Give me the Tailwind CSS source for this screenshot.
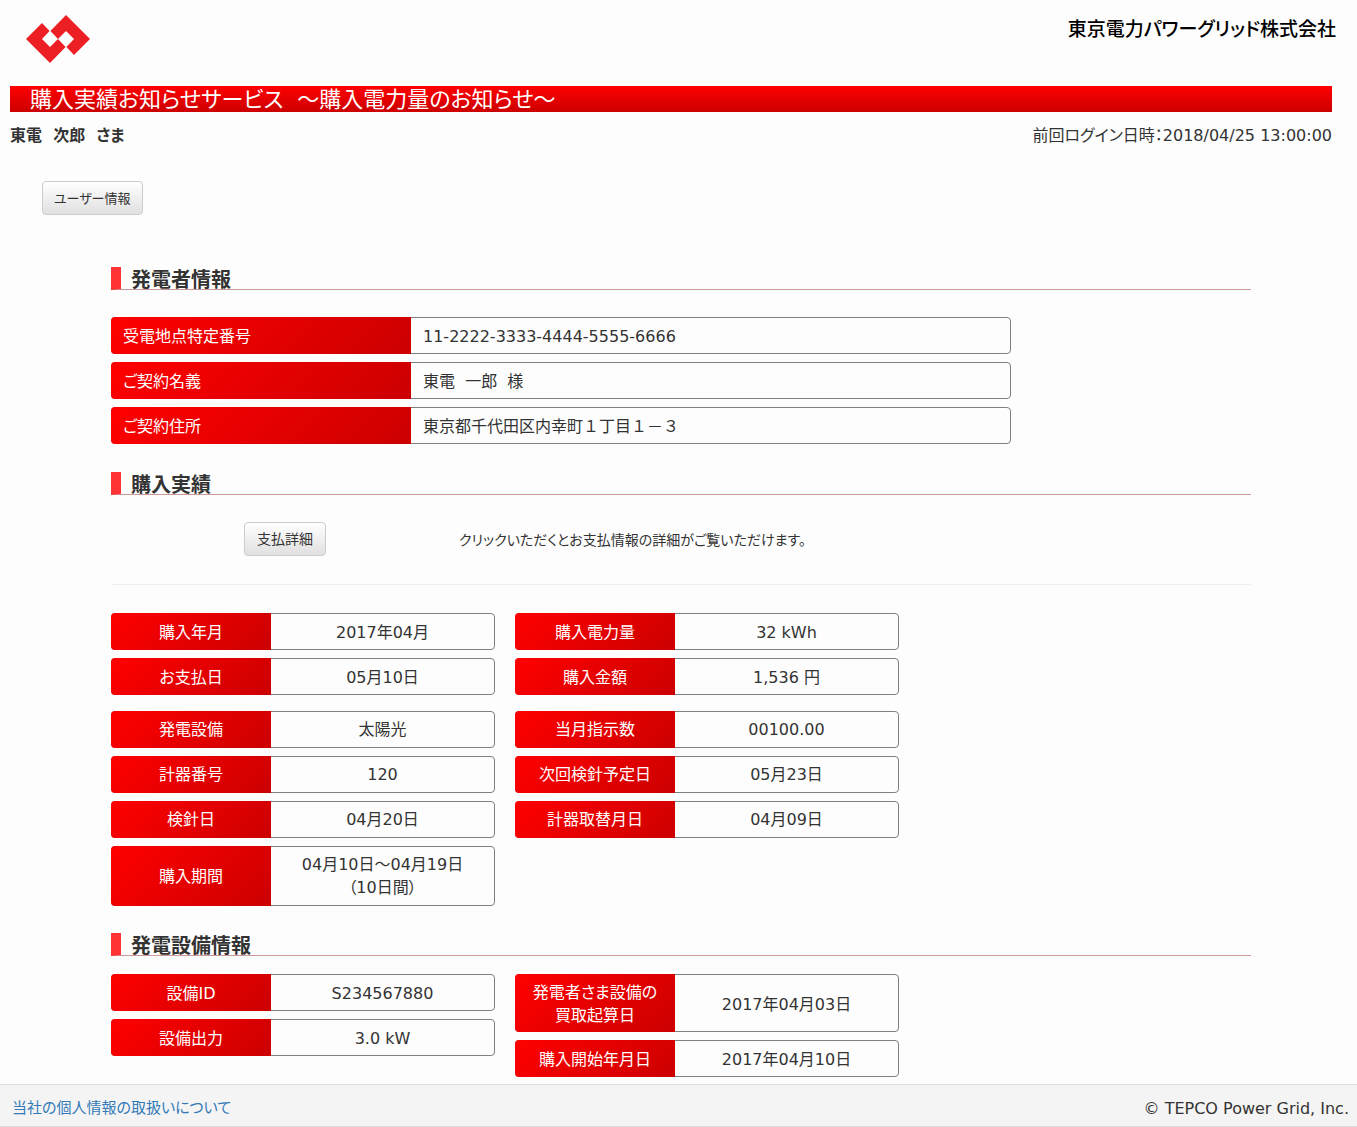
<!DOCTYPE html>
<html lang="ja">
<head>
<meta charset="utf-8">
<meta name="viewport" content="width=device-width, initial-scale=1">
<title>購入実績お知らせサービス</title>
<script src="https://cdn.jsdelivr.net/npm/@tailwindcss/browser@4"></script>
</head>
<body class="flex min-h-screen flex-col bg-[#fdfdfd] font-['DejaVu_Sans','Noto_Sans_CJK_JP',sans-serif] text-base leading-[23px] text-[#333] [font-feature-settings:'palt']">
<header class="pl-2.5 pr-[25px]">
  <div class="-mr-1 flex h-[86px] items-start justify-between">
    <svg class="mt-[14px] ml-4 h-[50px] w-[64px]" viewBox="26 14 64 50" role="img" aria-label="TEPCO">
      <path fill="#ec2024" d="M26 39 42 23 49.600 31 42 39 50 47 58 39 65.600 47 50 63ZM50.400 31 66 15 90 39 74 55 66.400 47 74 39 66 31 58 39Z"/>
    </svg>
    <p class="mt-[17px] text-[19px] leading-6 font-medium text-black">東京電力パワーグリッド株式会社</p>
  </div>
  <h1 class="h-[26px] bg-linear-to-b from-[#ff0000] to-[#cc0000] pl-5 text-[22px] leading-7 text-white">購入実績お知らせサービス&nbsp;&nbsp;～購入電力量のお知らせ～</h1>
  <div class="mt-3 flex justify-between">
    <p class="font-bold">東電&nbsp;&nbsp;次郎&nbsp;&nbsp;さま</p>
    <p>前回ログイン日時：2018/04/25 13:00:00</p>
  </div>
  <button type="button" class="mt-[34px] ml-8 block h-[34px] rounded border border-[#ccc] bg-linear-to-b from-white to-[#e0e0e0] px-[11px] text-[13px]">ユーザー情報</button>
</header>
<main class="pt-[52px] pr-[106px] pb-[7px] pl-[111px]">
  <section>
    <h2 class="h-[23px] border-b border-l-10 border-b-[#cc9999] border-l-[#ff3333] pt-0.5 pl-2.5 text-xl leading-[22px] font-bold">発電者情報</h2>
    <dl class="mt-[27px] flex max-w-[900px] flex-col gap-2">
      <div class="flex rounded border border-[#808080]">
        <dt class="-my-px -ml-px w-[300px] rounded-l bg-linear-[135deg] from-[#ff0000] to-[#cc0000] px-3 pt-2 pb-1.5 text-white">受電地点特定番号</dt><dd class="flex-1 px-3 pt-[7px] pb-[5px]">11-2222-3333-4444-5555-6666</dd>
      </div>
      <div class="flex rounded border border-[#808080]">
        <dt class="-my-px -ml-px w-[300px] rounded-l bg-linear-[135deg] from-[#ff0000] to-[#cc0000] px-3 pt-2 pb-1.5 text-white">ご契約名義</dt><dd class="flex-1 px-3 pt-[7px] pb-[5px]">東電&nbsp;&nbsp;一郎&nbsp;&nbsp;様</dd>
      </div>
      <div class="flex rounded border border-[#808080]">
        <dt class="-my-px -ml-px w-[300px] rounded-l bg-linear-[135deg] from-[#ff0000] to-[#cc0000] px-3 pt-2 pb-1.5 text-white">ご契約住所</dt><dd class="flex-1 px-3 pt-[7px] pb-[5px] [font-feature-settings:normal]">東京都千代田区内幸町１丁目１－３</dd>
      </div>
    </dl>
  </section>
  <section class="mt-7">
    <h2 class="h-[23px] border-b border-l-10 border-b-[#cc9999] border-l-[#ff3333] pt-0.5 pl-2.5 text-xl leading-[22px] font-bold">購入実績</h2>
    <div class="flex items-center border-b border-[#eee] pt-[27px] pb-7">
      <div class="flex w-[348px] justify-center"><button type="button" class="h-[34px] rounded border border-[#ccc] bg-linear-to-b from-white to-[#e0e0e0] px-3 text-sm">支払詳細</button></div>
      <p class="pt-0.5 text-sm">クリックいただくとお支払情報の詳細がご覧いただけます。</p>
    </div>
    <div class="mt-7 flex items-start gap-5 text-center">
      <dl class="flex w-96 flex-col gap-2">
        <div class="flex rounded border border-[#808080]"><dt class="-my-px -ml-px flex w-40 items-center justify-center rounded-l bg-linear-[135deg] from-[#ff0000] to-[#cc0000] pt-0.5 text-white">購入年月</dt><dd class="flex-1 pt-[7px] pb-[5px]">2017年04月</dd></div>
        <div class="flex rounded border border-[#808080]"><dt class="-my-px -ml-px flex w-40 items-center justify-center rounded-l bg-linear-[135deg] from-[#ff0000] to-[#cc0000] pt-0.5 text-white">お支払日</dt><dd class="flex-1 pt-[7px] pb-[5px]">05月10日</dd></div>
        <div class="mt-2 flex rounded border border-[#808080]"><dt class="-my-px -ml-px flex w-40 items-center justify-center rounded-l bg-linear-[135deg] from-[#ff0000] to-[#cc0000] text-white">発電設備</dt><dd class="flex-1 py-1.5">太陽光</dd></div>
        <div class="flex rounded border border-[#808080]"><dt class="-my-px -ml-px flex w-40 items-center justify-center rounded-l bg-linear-[135deg] from-[#ff0000] to-[#cc0000] text-white">計器番号</dt><dd class="flex-1 py-1.5">120</dd></div>
        <div class="flex rounded border border-[#808080]"><dt class="-my-px -ml-px flex w-40 items-center justify-center rounded-l bg-linear-[135deg] from-[#ff0000] to-[#cc0000] text-white">検針日</dt><dd class="flex-1 py-1.5">04月20日</dd></div>
        <div class="flex rounded border border-[#808080]"><dt class="-my-px -ml-px flex w-40 items-center justify-center rounded-l bg-linear-[135deg] from-[#ff0000] to-[#cc0000] text-white">購入期間</dt><dd class="flex-1 py-1.5">04月10日～04月19日<br>（10日間）</dd></div>
      </dl>
      <dl class="flex w-96 flex-col gap-2">
        <div class="flex rounded border border-[#808080]"><dt class="-my-px -ml-px flex w-40 items-center justify-center rounded-l bg-linear-[135deg] from-[#ff0000] to-[#cc0000] pt-0.5 text-white">購入電力量</dt><dd class="flex-1 pt-[7px] pb-[5px]">32 kWh</dd></div>
        <div class="flex rounded border border-[#808080]"><dt class="-my-px -ml-px flex w-40 items-center justify-center rounded-l bg-linear-[135deg] from-[#ff0000] to-[#cc0000] pt-0.5 text-white">購入金額</dt><dd class="flex-1 pt-[7px] pb-[5px]">1,536 円</dd></div>
        <div class="mt-2 flex rounded border border-[#808080]"><dt class="-my-px -ml-px flex w-40 items-center justify-center rounded-l bg-linear-[135deg] from-[#ff0000] to-[#cc0000] text-white">当月指示数</dt><dd class="flex-1 py-1.5">00100.00</dd></div>
        <div class="flex rounded border border-[#808080]"><dt class="-my-px -ml-px flex w-40 items-center justify-center rounded-l bg-linear-[135deg] from-[#ff0000] to-[#cc0000] text-white">次回検針予定日</dt><dd class="flex-1 py-1.5">05月23日</dd></div>
        <div class="flex rounded border border-[#808080]"><dt class="-my-px -ml-px flex w-40 items-center justify-center rounded-l bg-linear-[135deg] from-[#ff0000] to-[#cc0000] text-white">計器取替月日</dt><dd class="flex-1 py-1.5">04月09日</dd></div>
      </dl>
    </div>
  </section>
  <section class="mt-[27px]">
    <h2 class="h-[23px] border-b border-l-10 border-b-[#cc9999] border-l-[#ff3333] pt-0.5 pl-2.5 text-xl leading-[22px] font-bold">発電設備情報</h2>
    <div class="mt-[18px] flex items-start gap-5 text-center">
      <dl class="flex w-96 flex-col gap-2">
        <div class="flex rounded border border-[#808080]"><dt class="-my-px -ml-px flex w-40 items-center justify-center rounded-l bg-linear-[135deg] from-[#ff0000] to-[#cc0000] pt-0.5 text-white">設備ID</dt><dd class="flex-1 pt-[7px] pb-[5px]">S234567880</dd></div>
        <div class="flex rounded border border-[#808080]"><dt class="-my-px -ml-px flex w-40 items-center justify-center rounded-l bg-linear-[135deg] from-[#ff0000] to-[#cc0000] pt-0.5 text-white">設備出力</dt><dd class="flex-1 pt-[7px] pb-[5px]">3.0 kW</dd></div>
      </dl>
      <dl class="flex w-96 flex-col gap-2">
        <div class="flex rounded border border-[#808080]"><dt class="-my-px -ml-px w-40 rounded-l bg-linear-[135deg] from-[#ff0000] to-[#cc0000] pt-[7px] pb-[5px] text-white">発電者さま設備の<br>買取起算日</dt><dd class="flex flex-1 items-center justify-center pt-0.5">2017年04月03日</dd></div>
        <div class="flex rounded border border-[#808080]"><dt class="-my-px -ml-px flex w-40 items-center justify-center rounded-l bg-linear-[135deg] from-[#ff0000] to-[#cc0000] pt-0.5 text-white">購入開始年月日</dt><dd class="flex-1 pt-[7px] pb-[5px]">2017年04月10日</dd></div>
      </dl>
    </div>
  </section>
</main>
<footer class="flex h-[43px] items-center justify-between border-y border-[#ddd] bg-[#f4f4f4] pt-1.5 pr-2 pl-3">
  <a href="#" class="text-[15px] text-[#337ab7]">当社の個人情報の取扱いについて</a>
  <p>© TEPCO Power Grid, Inc.</p>
</footer>
</body>
</html>
